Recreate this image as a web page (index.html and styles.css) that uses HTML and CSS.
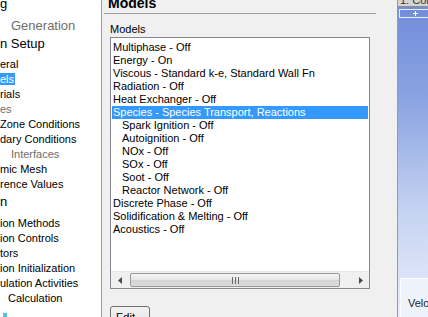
FILE: index.html
```html
<!DOCTYPE html>
<html lang="en">
<head>
  <meta charset="UTF-8">
  <title>Models</title>
  <link rel="stylesheet" href="styles.css">
</head>
<body>
  <div class="app">
    <div class="tree">
      <div class="tree-list">
        <div class="node top">g</div>
        <div class="node top muted indent">Generation</div>
        <div class="node top">n Setup</div>
        <div class="group">
          <div class="node">eral</div>
          <div class="node"><span class="picked">els</span></div>
          <div class="node">rials</div>
          <div class="node muted">es</div>
          <div class="node">Zone Conditions</div>
          <div class="node">dary Conditions</div>
          <div class="node muted indent">Interfaces</div>
          <div class="node">mic Mesh</div>
          <div class="node">rence Values</div>
        </div>
        <div class="node top section">n</div>
        <div class="group later">
          <div class="node">ion Methods</div>
          <div class="node">ion Controls</div>
          <div class="node">tors</div>
          <div class="node">ion Initialization</div>
          <div class="node">ulation Activities</div>
          <div class="node run">Calculation</div>
        </div>
        <div class="node top"><span class="node-icon"></span></div>
      </div>
    </div>

    <div class="task">
      <div class="task-title">Models</div>
      <div class="field-label">Models</div>
      <div class="listbox">
        <ul class="items">
          <li>Multiphase - Off</li>
          <li>Energy - On</li>
          <li>Viscous - Standard k-e, Standard Wall Fn</li>
          <li>Radiation - Off</li>
          <li>Heat Exchanger - Off</li>
          <li class="selected">Species - Species Transport, Reactions</li>
          <li class="sub">Spark Ignition - Off</li>
          <li class="sub">Autoignition - Off</li>
          <li class="sub">NOx - Off</li>
          <li class="sub">SOx - Off</li>
          <li class="sub">Soot - Off</li>
          <li class="sub">Reactor Network - Off</li>
          <li>Discrete Phase - Off</li>
          <li>Solidification &amp; Melting - Off</li>
          <li>Acoustics - Off</li>
        </ul>
        <div class="hscroll">
          <span class="arrow">
            <svg width="4" height="7" viewBox="0 0 4 7"><polygon points="4,0 0,3.5 4,7" fill="#4a4a4a"/></svg>
          </span>
          <div class="thumb">
            <svg width="7" height="7" viewBox="0 0 7 7">
              <rect x="0" y="0" width="1" height="7" fill="#6a6a6a"/>
              <rect x="3" y="0" width="1" height="7" fill="#6a6a6a"/>
              <rect x="6" y="0" width="1" height="7" fill="#6a6a6a"/>
            </svg>
          </div>
          <span class="arrow right">
            <svg width="4" height="7" viewBox="0 0 4 7"><polygon points="0,0 4,3.5 0,7" fill="#4a4a4a"/></svg>
          </span>
        </div>
      </div>
      <button class="edit">Edit...</button>
    </div>

    <div class="graphics">
      <div class="tab">1: Contours</div>
      <div class="toolbar">
        <svg width="5" height="5" viewBox="0 0 5 5">
          <rect x="2" y="0" width="1" height="5" fill="#fff"/>
          <rect x="0" y="2" width="5" height="1" fill="#fff"/>
        </svg>
      </div>
      <div class="legend">Velocity Magnitude</div>
    </div>
  </div>
</body>
</html>
```

FILE: styles.css
```css
* {
  box-sizing: border-box;
}

html, body {
  margin: 0;
  padding: 0;
}

body {
  font-family: 'Liberation Sans', Arial, sans-serif;
  font-size: 11px;
  color: #000;
  background: #f0f0f0;
}

.app {
  display: flex;
  height: 317px;
  overflow: hidden;
}

/* outline tree, scrolled to the right */
.tree {
  width: 102px;
  flex: none;
  background: #fff;
  border-right: 1px solid #9c9c9c;
  overflow: hidden;
}

.tree-list {
  margin-top: -5px;
}

.node {
  height: 15px;
  line-height: 15px;
  white-space: nowrap;
}

.node.top {
  height: 18px;
  line-height: 18px;
  font-size: 13px;
}

.node.top + .node.top {
  margin-top: 4px;
}

.node.top.indent + .node.top {
  margin-top: 0;
}

.node.muted {
  color: #6d6d6d;
}

.node.indent {
  padding-left: 11px;
}

.node.top.indent {
  padding-left: 11px;
}

.node.run {
  padding-left: 8px;
}

.node.section {
  margin-top: 1px;
}

.group {
  margin-top: 4px;
}

.group.later {
  margin-top: 5px;
}

.picked {
  display: inline-block;
  line-height: 12px;
  padding-right: 1px;
  background: #3399ff;
  color: #fff;
}

.node-icon {
  display: inline-block;
  width: 4px;
  height: 6px;
  margin: 7px 0 0 3px;
  background: #4cc4e6;
  vertical-align: top;
}

/* task page */
.task {
  width: 295px;
  flex: none;
  padding-left: 8px;
}

.task-title {
  width: 272px;
  margin: -3px 0 0 -6px;
  padding: 0 0 3px 4px;
  font-size: 14px;
  font-weight: bold;
  line-height: 13px;
  border-bottom: 1px solid #a0a0a0;
}

.field-label {
  margin-top: 9px;
  line-height: 13px;
}

.listbox {
  width: 260px;
  height: 252px;
  margin-top: 1px;
  border: 1px solid #828790;
  background: #fff;
  display: flex;
  flex-direction: column;
}

.items {
  flex: 1;
  list-style: none;
  margin: 0;
  padding: 3px 1px 0;
}

.items li {
  height: 13px;
  line-height: 13px;
  padding-left: 1px;
  white-space: nowrap;
  overflow: hidden;
}

.items li.sub {
  padding-left: 10px;
}

.items li.selected {
  background: #3399ff;
  color: #fff;
}

.hscroll {
  height: 17px;
  flex: none;
  display: flex;
  align-items: center;
  background: #f0f0f0;
  border-top: 1px solid #e6e6e6;
}

.arrow {
  width: 17px;
  height: 16px;
  display: flex;
  align-items: center;
  justify-content: center;
}

.arrow.right {
  margin-left: auto;
}

.thumb {
  width: 210px;
  height: 14px;
  margin-left: 2px;
  border: 1px solid #989898;
  border-radius: 2px;
  background: linear-gradient(#f4f4f4, #e6e6e6 50%, #d4d4d4 51%, #dcdcdc);
  display: flex;
  align-items: center;
  justify-content: center;
}

.edit {
  display: block;
  width: 40px;
  height: 23px;
  margin-top: 17px;
  padding: 0 5px;
  text-align: left;
  font-family: inherit;
  font-size: 11px;
  line-height: 17px;
  color: #000;
  border: 1px solid #707070;
  border-radius: 3px;
  background: linear-gradient(#f2f2f2, #ebebeb 50%, #dddddd 51%, #cfcfcf);
}

/* graphics window */
.graphics {
  flex: 1;
  border-left: 1px solid #9a9a9a;
  background: linear-gradient(#6f8cdb 0, #8aa3e1 31%, #c4d2f1 66%, #dbe3f7 87%, #e8eefa 100%);
  display: flex;
  flex-direction: column;
}

.tab {
  height: 7px;
  flex: none;
  padding-left: 2px;
  line-height: 1px;
  white-space: nowrap;
  overflow: hidden;
  color: #333;
  background: #d4d4d4;
  border-bottom: 1px solid #8c8c8c;
}

.toolbar {
  height: 9px;
  flex: none;
  margin: 2px 0 0 1px;
  padding-left: 13px;
  border: 1px solid #e9eefa;
  border-right: none;
  display: flex;
  align-items: center;
}

.legend {
  height: 60px;
  flex: none;
  margin: 260px 0 0 2px;
  padding: 18px 0 0 7px;
  line-height: 13px;
  white-space: nowrap;
  overflow: hidden;
  color: #222;
  background: #eef2fb;
  border: 1px solid #fbfcff;
  border-right: none;
}
```
